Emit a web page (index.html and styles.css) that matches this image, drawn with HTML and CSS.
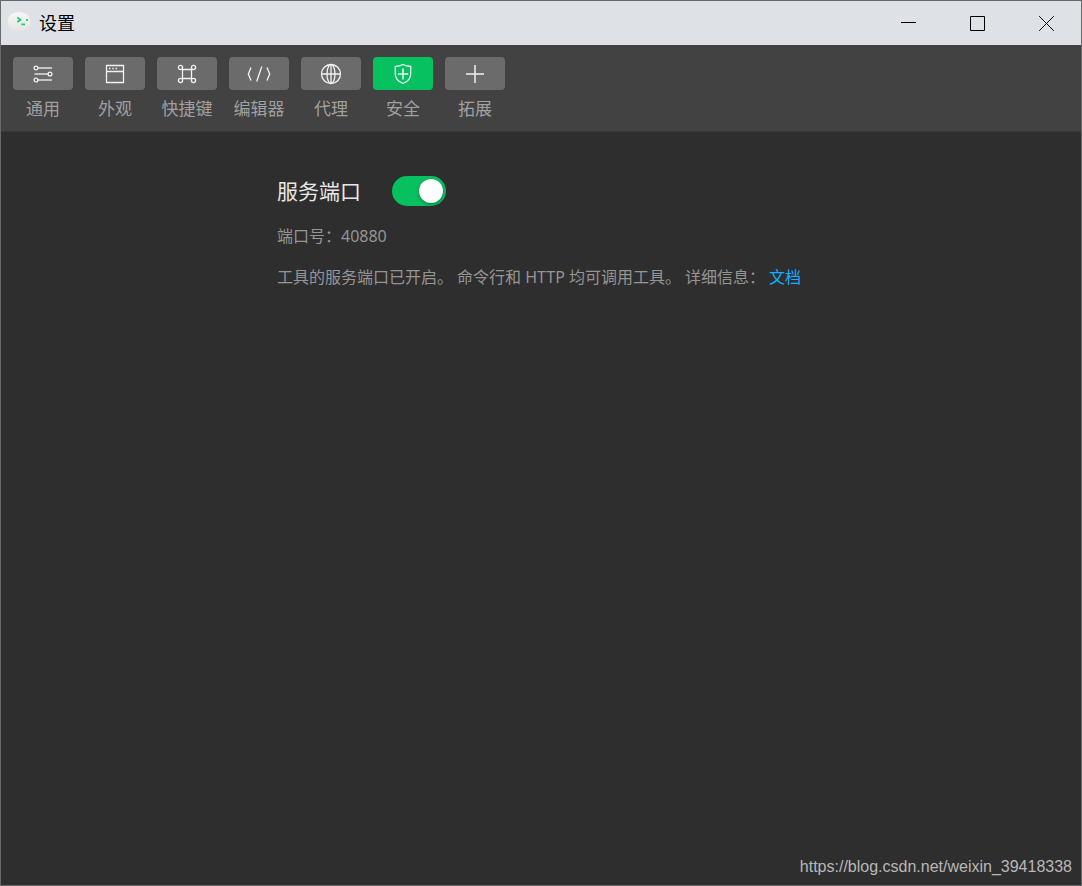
FILE: index.html
```html
<!DOCTYPE html>
<html lang="zh-CN">
<head>
<meta charset="utf-8">
<title>设置</title>
<link rel="stylesheet" href="styles.css">
</head>
<body>
<div class="window">
  <header class="titlebar">
    <svg class="logo" viewBox="0 0 24 24" aria-hidden="true">
      <defs><linearGradient id="bubble" x1="0" y1="0" x2="0" y2="1"><stop offset="0" stop-color="#f7f7f7"/><stop offset="1" stop-color="#e3e3e3"/></linearGradient></defs>
      <path d="M12 1C5.500 1 .5 5 .5 10.800c0 3.300 1.600 6 4.300 7.800L4.500 21.800l4-2c1.100.3 2.300.4 3.500.4 6.500 0 11.500-4 11.500-9.400S18.500 1 12 1z" fill="url(#bubble)"/>
      <path d="M10.300 6.500l3.200 2.300-3.200 2.300M14.300 13.300h3.700M20 8v2" fill="none" stroke="#21ca72" stroke-width="1.800"/>
    </svg>
    <h1 class="title">设置</h1>
    <div class="controls">
      <button class="control" aria-label="最小化"><svg viewBox="0 0 15 15"><path d="M0 6.500h15"/></svg></button>
      <button class="control" aria-label="最大化"><svg viewBox="0 0 15 15"><path d="M.5.5h14v14H.5z"/></svg></button>
      <button class="control" aria-label="关闭"><svg viewBox="0 0 15 15"><path d="M.2.2l14.600 14.600M14.800.2L.2 14.800"/></svg></button>
    </div>
  </header>

  <nav class="toolbar">
    <button class="tab"><span class="tile"><svg viewBox="0 0 22 22"><circle cx="4" cy="5" r="1.900"/><path d="M6 5h14"/><circle cx="18" cy="11" r="1.900"/><path d="M2.500 11h13.500"/><circle cx="4" cy="17" r="1.900"/><path d="M6 17h14"/></svg></span><span class="label">通用</span></button>
    <button class="tab"><span class="tile"><svg viewBox="0 0 22 22"><path d="M2.500 2.500h17v17h-17zM2.500 8.500h17"/><path d="M5 5.500h1.500M8.300 5.500h1.500M11.600 5.500h1.500"/></svg></span><span class="label">外观</span></button>
    <button class="tab"><span class="tile"><svg viewBox="0 0 22 22"><path d="M6.500 6.500h9v9h-9z"/><circle cx="4.500" cy="4.500" r="2.100"/><circle cx="17.500" cy="4.500" r="2.100"/><circle cx="4.500" cy="17.500" r="2.100"/><circle cx="17.500" cy="17.500" r="2.100"/></svg></span><span class="label">快捷键</span></button>
    <button class="tab"><span class="tile"><svg class="wide" viewBox="0 0 26 22"><path d="M5 4.500L2.300 11 5 17.500M21 4.500l2.700 6.500L21 17.500M15.800 3.500l-5.100 15"/></svg></span><span class="label">编辑器</span></button>
    <button class="tab"><span class="tile"><svg viewBox="0 0 22 22"><circle cx="11" cy="11" r="9.500"/><ellipse cx="11" cy="11" rx="4" ry="9.500"/><path d="M11 1.500v19M1.500 11h19"/></svg></span><span class="label">代理</span></button>
    <button class="tab active" aria-current="page"><span class="tile"><svg viewBox="0 0 22 22"><path d="M11 1.500c2.500 1.300 5 1.900 7.700 2v7.300c0 5-3.200 8-7.700 9.700-4.500-1.700-7.700-4.700-7.700-9.700V3.500c2.700-.1 5.200-.7 7.700-2z"/><path class="bold" d="M11 5.500v11M5.800 11h10.400"/></svg></span><span class="label">安全</span></button>
    <button class="tab"><span class="tile"><svg viewBox="0 0 22 22"><path class="bold" d="M11 2v18M2 11h18"/></svg></span><span class="label">拓展</span></button>
  </nav>

  <main class="content">
    <section class="panel">
      <div class="setting">
        <label class="setting-name" for="service-port">服务端口</label>
        <input class="switch" id="service-port" type="checkbox" role="switch" checked>
      </div>
      <p class="line">端口号：40880</p>
      <p class="line"><span>工具的服务端口已开启。</span><span>命令行和 HTTP 均可调用工具。</span><span>详细信息：</span><a class="link" href="#docs">文档</a></p>
    </section>
    <footer class="credit">https://blog.csdn.net/weixin_39418338</footer>
  </main>
</div>
</body>
</html>
```
FILE: styles.css
```css
* { box-sizing: border-box; }
body {
  margin: 0;
  background: #2e2e2e;
  font-family: "Noto Sans", "Noto Sans CJK SC", sans-serif;
  font-weight: 400;
}
button { padding: 0; border: 0; background: none; font: inherit; }
.window {
  display: flex;
  flex-direction: column;
  min-height: 100vh;
  border: 1px solid #68696b;
}
.titlebar {
  display: flex;
  align-items: center;
  height: 44px;
  padding-left: 6px;
  background: #dee1e6;
  color: #000;
}
.logo { width: 24px; height: 24px; }
.title {
  margin: 0 auto 0 8px;
  font-size: 18px;
  line-height: 24px;
  font-weight: 400;
}
.controls { display: flex; align-self: stretch; }
.control {
  display: flex;
  align-items: center;
  justify-content: center;
  width: 69px;
}
.control svg {
  width: 15px;
  height: 15px;
  fill: none;
  stroke: #000;
  stroke-width: 1;
}
.toolbar {
  display: flex;
  gap: 12px;
  padding: 12px 12px 8px;
  background: #424242;
  border-bottom: 1px solid #383838;
}
.tab {
  display: flex;
  flex-direction: column;
  align-items: center;
  gap: 4px;
  width: 60px;
  color: #a0a0a0;
}
.tile {
  display: flex;
  align-items: center;
  justify-content: center;
  width: 100%;
  height: 33px;
  border-radius: 4px;
  background: #6b6b6b;
}
.active .tile { background: #07c160; }
.tile svg {
  width: 22px;
  height: 22px;
  fill: none;
  stroke: #f2f2f2;
  stroke-width: 1.3;
}
.tile .wide { width: 26px; }
.tile .bold { stroke-width: 1.5; }
.label { font-size: 17px; line-height: 29px; white-space: nowrap; }
.content {
  display: flex;
  flex-direction: column;
  flex: 1;
  align-items: center;
}
.panel {
  width: 100%;
  max-width: 528px;
  padding-top: 43px;
}
.setting { display: flex; align-items: center; gap: 31px; }
.setting-name { color: #e8e8e8; font-size: 21px; line-height: 32px; }
.switch {
  appearance: none;
  display: flex;
  justify-content: flex-end;
  width: 54px;
  height: 30px;
  margin: 0;
  padding: 3px;
  border-radius: 15px;
  background: #07c160;
}
.switch::before {
  content: "";
  width: 24px;
  height: 24px;
  border-radius: 50%;
  background: #fff;
  box-shadow: 0 1px 3px rgba(0, 0, 0, 0.4);
}
.switch:not(:checked) { justify-content: flex-start; background: #6b6b6b; }
.line {
  display: flex;
  flex-wrap: wrap;
  column-gap: 4px;
  margin: 17px 0 0;
  color: #959595;
  font-size: 16px;
  line-height: 24px;
}
.link { color: #10aeff; text-decoration: none; }
.credit {
  align-self: flex-end;
  margin-top: auto;
  padding: 0 9px 8px;
  color: #b8b8b8;
  font-family: "Liberation Sans", Arial, sans-serif;
  font-size: 16px;
  line-height: 20px;
}
```
